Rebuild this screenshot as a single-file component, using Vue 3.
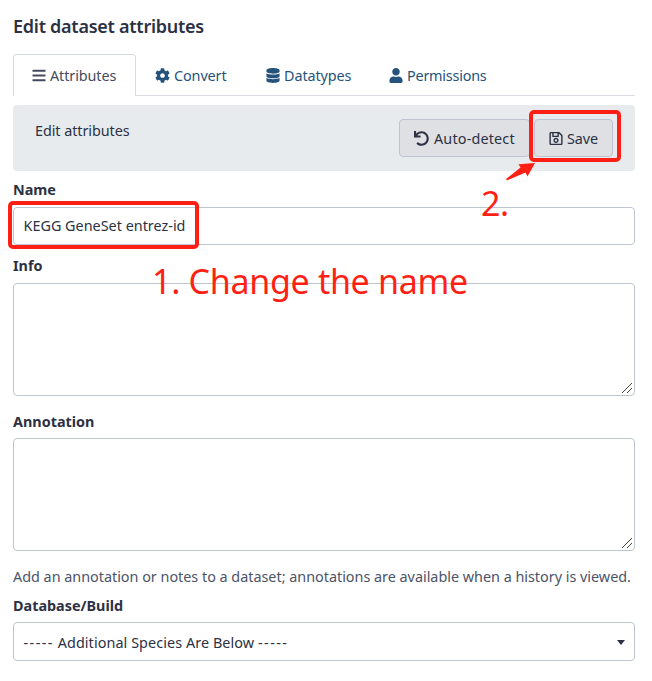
<script setup>
import { ref } from 'vue'

const tabs = [
  { id: 'attributes', label: 'Attributes', box: '0 0 448 512', path: 'M16 132h416c8.8 0 16-7.200 16-16V76c0-8.800-7.200-16-16-16H16C7.200 60 0 67.200 0 76v40c0 8.800 7.200 16 16 16zm0 160h416c8.800 0 16-7.200 16-16v-40c0-8.800-7.200-16-16-16H16c-8.800 0-16 7.200-16 16v40c0 8.800 7.200 16 16 16zm0 160h416c8.800 0 16-7.200 16-16v-40c0-8.800-7.200-16-16-16H16c-8.800 0-16 7.200-16 16v40c0 8.800 7.200 16 16 16z' },
  { id: 'convert', label: 'Convert', box: '0 0 512 512', path: 'M487.400 315.700l-42.600-24.600c4.300-23.200 4.300-47 0-70.200l42.600-24.600c4.900-2.800 7.100-8.600 5.500-14-11.100-35.600-30-67.800-54.700-94.600-3.800-4.100-10-5.100-14.800-2.300L380.800 110c-17.900-15.400-38.500-27.300-60.800-35.100V25.800c0-5.600-3.900-10.500-9.400-11.700-36.700-8.200-74.300-7.800-109.200 0-5.500 1.200-9.400 6.100-9.400 11.700V75c-22.200 7.900-42.800 19.800-60.800 35.100L88.700 85.500c-4.900-2.800-11-1.900-14.800 2.300-24.700 26.700-43.600 58.900-54.700 94.600-1.700 5.400.6 11.200 5.500 14L67.300 221c-4.300 23.200-4.300 47 0 70.200l-42.600 24.600c-4.900 2.800-7.100 8.600-5.500 14 11.100 35.600 30 67.800 54.700 94.600 3.800 4.100 10 5.100 14.800 2.300l42.600-24.600c17.900 15.400 38.500 27.300 60.800 35.100v49.200c0 5.600 3.900 10.500 9.400 11.700 36.700 8.200 74.300 7.800 109.200 0 5.500-1.200 9.400-6.100 9.400-11.700v-49.200c22.200-7.900 42.800-19.800 60.800-35.100l42.600 24.600c4.900 2.800 11 1.900 14.800-2.300 24.700-26.700 43.600-58.900 54.700-94.600 1.500-5.500-.7-11.300-5.600-14.100zM256 336c-44.100 0-80-35.900-80-80s35.900-80 80-80 80 35.900 80 80-35.900 80-80 80z' },
  { id: 'datatypes', label: 'Datatypes', box: '0 0 448 512', path: 'M448 73.143v45.714C448 159.143 347.667 192 224 192S0 159.143 0 118.857V73.143C0 32.857 100.333 0 224 0s224 32.857 224 73.143zM448 176v102.857C448 319.143 347.667 352 224 352S0 319.143 0 278.857V176c48.125 33.143 136.208 48.572 224 48.572S399.874 209.143 448 176zm0 160v102.857C448 479.143 347.667 512 224 512S0 479.143 0 438.857V336c48.125 33.143 136.208 48.572 224 48.572S399.874 369.143 448 336z' },
  { id: 'permissions', label: 'Permissions', box: '0 0 448 512', path: 'M224 256c70.700 0 128-57.300 128-128S294.700 0 224 0 96 57.300 96 128s57.300 128 128 128zm89.600 32h-16.700c-22.200 10.200-46.900 16-72.900 16s-50.600-5.800-72.900-16h-16.700C60.200 288 0 348.200 0 422.400V464c0 26.500 21.500 48 48 48h352c26.500 0 48-21.500 48-48v-41.600c0-74.200-60.200-134.400-134.400-134.400z' },
]
const active = ref('attributes')
const name = ref('KEGG GeneSet entrez-id')
const info = ref('')
const annotation = ref('')
</script>

<template>
  <main class="page">
    <h1 class="title"><span>Edit dataset attributes</span></h1>
    <nav class="tabs">
      <a v-for="t in tabs" :key="t.id" class="tab" :class="[t.id, { active: t.id === active }]" @click="active = t.id">
        <svg class="icon" :viewBox="t.box"><path :d="t.path" /></svg>
        <span>{{ t.label }}</span>
      </a>
    </nav>
    <section class="panel">
      <span class="panel-title">Edit attributes</span>
      <div class="actions">
        <button class="btn detect">
          <svg class="icon wide" viewBox="0 0 512 512"><path d="M212.333 224.333H12c-6.627 0-12-5.373-12-12V12C0 5.373 5.373 0 12 0h48c6.627 0 12 5.373 12 12v78.112C117.773 39.279 184.260 7.470 258.175 8.007c136.906.994 246.448 111.623 246.157 248.532C504.041 393.258 393.120 504 256.333 504c-64.089 0-122.496-24.313-166.510-64.215-5.099-4.622-5.334-12.554-.467-17.420l33.967-33.967c4.474-4.474 11.662-4.717 16.401-.525C170.760 415.336 211.580 432 256.333 432c97.268 0 176-78.716 176-176 0-97.267-78.716-176-176-176-58.496 0-110.280 28.476-142.274 72.333h98.274c6.627 0 12 5.373 12 12v48c0 6.627-5.373 12-12 12z" /></svg>
          <span>Auto-detect</span>
        </button>
        <button class="btn save">
          <svg class="icon" viewBox="0 0 448 512"><path d="M433.941 129.941l-83.882-83.882A48 48 0 0 0 316.118 32H48C21.490 32 0 53.490 0 80v352c0 26.510 21.490 48 48 48h352c26.510 0 48-21.490 48-48V163.882a48 48 0 0 0-14.059-33.941zM272 80v80H144V80h128zm122 352H54a6 6 0 0 1-6-6V86a6 6 0 0 1 6-6h42v104c0 13.255 10.745 24 24 24h176c13.255 0 24-10.745 24-24V83.882l78.243 78.243a6 6 0 0 1 1.757 4.243V426a6 6 0 0 1-6 6zM224 232c-48.523 0-88 39.477-88 88s39.477 88 88 88 88-39.477 88-88-39.477-88-88-88zm0 128c-22.056 0-40-17.944-40-40s17.944-40 40-40 40 17.944 40 40-17.944 40-40 40z" /></svg>
          <span>Save</span>
        </button>
      </div>
    </section>

    <label class="label name-label" for="name"><span>Name</span></label>
    <input id="name" v-model="name" class="control" type="text" />
    <label class="label info-label" for="info"><span>Info</span></label>
    <textarea id="info" v-model="info" class="control area"></textarea>
    <label class="label note-label" for="annotation"><span>Annotation</span></label>
    <textarea id="annotation" v-model="annotation" class="control area"></textarea>
    <p class="help"><span>Add an annotation or notes to a dataset; annotations are available when a history is viewed.</span></p>
    <label class="label build-label"><span>Database/Build</span></label>
    <div class="control select">
      <span><span class="dashes">-----</span> Additional Species Are Below <span class="dashes">-----</span></span>
      <i class="caret"></i>
    </div>

    <div class="mark mark-name"></div>
    <div class="mark mark-save"></div>
    <div class="note note-one">1. Change the name</div>
    <div class="note note-two">2.</div>
    <svg class="arrow" viewBox="0 0 32 20"><path d="M1 17L15.500 5.500 13.500 2.300 30 1 22.500 14.500 20.500 10.500 2 18.400Z" /></svg>
  </main>
</template>

<style>
body { margin: 0; background: #fff; }
</style>

<style scoped>
* { box-sizing: border-box; }
.page {
  position: relative;
  display: flex;
  flex-direction: column;
  width: 652px;
  height: 681px;
  padding: 0 17px 0 13px;
  overflow: hidden;
  color: #2c3143;
  font: 400 14.4px/22px "Noto Sans", "Open Sans", sans-serif;
  white-space: nowrap;
}
.title {
  height: 54px;
  margin: 0;
  padding-top: 15px;
  font-size: 18px;
  font-weight: 600;
  letter-spacing: -0.26px;
}
.tabs { display: flex; height: 42px; border-bottom: 1px solid #dadde4; }
.tab {
  display: flex;
  align-items: center;
  height: 42px;
  padding: 0 18px;
  border: 1px solid transparent;
  border-bottom: 0;
  border-radius: 4px 4px 0 0;
  color: #25537b;
  gap: 4px;
  letter-spacing: -0.1px;
  cursor: pointer;
}
.tab.active { width: 123px; color: #444b61; background: #fff; border-color: #d5dae1; }
.convert { width: 111px; }
.datatypes { width: 123px; }
.permissions { letter-spacing: -0.22px; }
.icon { flex: none; width: 14px; height: 15px; fill: currentColor; }
.convert .icon, .wide { width: 15px; }
.panel {
  display: flex;
  justify-content: space-between;
  height: 66px;
  margin-top: 9px;
  padding: 14px 22px;
  border-radius: 4px;
  background: #e8ebee;
}
.panel-title { padding-top: 1px; letter-spacing: -0.07px; }
.actions { display: flex; gap: 4px; height: 38px; }
.btn {
  display: flex;
  align-items: center;
  gap: 4px;
  height: 38px;
  padding: 1px 14px 0;
  border: 1px solid #bdc3d1;
  border-radius: 4px;
  background: #dee0e4;
  color: #2c3143;
  font: inherit;
}
.detect { width: 131px; gap: 5px; letter-spacing: 0.16px; }
.save { width: 79px; letter-spacing: -0.1px; }
.label { flex: none; font-weight: 700; }
.name-label { height: 36px; padding-top: 8px; }
.info-label { height: 38px; padding-top: 10px; }
.note-label { height: 42px; padding-top: 15px; }
.build-label { height: 28px; padding-top: 1px; }
.control {
  display: block;
  flex: none;
  width: 100%;
  height: 38px;
  margin: 0;
  padding: 0 10px 1px 9.5px;
  border: 1px solid #bdc6d0;
  border-radius: 4px;
  outline: none;
  background: #fff;
  color: #2c3143;
  font: inherit;
}
.area { height: 113px; resize: vertical; }
.area::-webkit-resizer {
  background: url("data:image/svg+xml,%3Csvg xmlns='http://www.w3.org/2000/svg' width='15' height='15'%3E%3Cpath d='M3 13L13 3M8 13L13 8' stroke='%23444' fill='none'/%3E%3C/svg%3E") no-repeat;
}
.help { flex: none; height: 43px; margin: 0; padding-top: 15px; color: #4c5367; letter-spacing: -0.015px; }
.select { display: flex; align-items: center; justify-content: space-between; height: 39px; padding: 2px 9px 0 9.5px; letter-spacing: 0.07px; }
.dashes { letter-spacing: 1.45px; }
.caret { border: 4.5px solid transparent; border-top: 5px solid #2c3143; border-bottom: 0; }
.mark { position: absolute; border: 4px solid #ff1f14; border-radius: 5px; pointer-events: none; }
.mark-name { left: 8px; top: 201px; width: 191px; height: 48px; }
.mark-save { left: 528.5px; top: 110px; width: 92px; height: 52px; }
.note { position: absolute; color: #ff1f14; line-height: 50px; pointer-events: none; }
.note-one { left: 152px; top: 256px; font-size: 34px; letter-spacing: -0.3px; }
.note-two { left: 481px; top: 178px; font-size: 34px; letter-spacing: -0.5px; }
.arrow { position: absolute; left: 505px; top: 162px; width: 32px; height: 20px; fill: #ff1f14; }
</style>
